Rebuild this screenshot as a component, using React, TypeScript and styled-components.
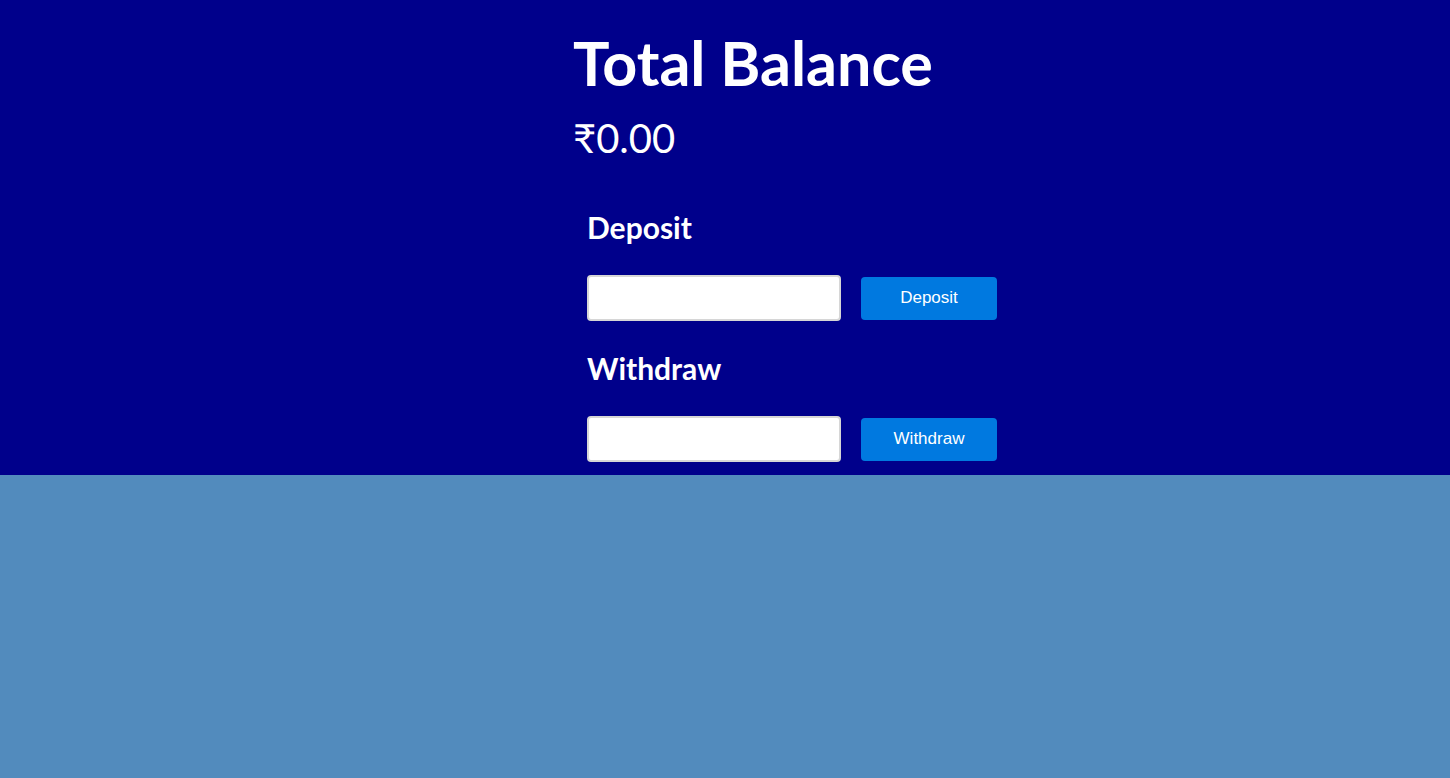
import React, { useState } from 'react';
import styled, { createGlobalStyle } from 'styled-components';

const GlobalStyle = createGlobalStyle`
  html, body {
    margin: 0;
    padding: 0;
    background-color: #528bbd;
    font-family: Lato, "Open Sans", sans-serif;
  }
`;

const Hero = styled.section`
  background-color: #00008b;
  color: #fff;
  height: 475px;
  box-sizing: border-box;
  padding-top: 27px;
`;

const Wrapper = styled.div`
  width: 304px;
  margin: 0 auto;
`;

const Title = styled.h1`
  margin: 0;
  font-size: 61px;
  line-height: 72px;
  font-weight: 700;
  white-space: nowrap;
`;

const Amount = styled.div`
  margin-top: 17px;
  font-size: 40px;
  line-height: 44px;
  font-weight: 400;
`;

const Form = styled.div`
  padding-left: 14px;
  margin-top: 50px;
`;

const Heading = styled.h2<{ $first?: boolean }>`
  margin: ${(p) => (p.$first ? '0' : '30px')} 0 0;
  font-size: 30px;
  line-height: 35px;
  font-weight: 700;
`;

const Row = styled.div`
  display: flex;
  align-items: center;
  gap: 20px;
  margin-top: 30px;
`;

const Input = styled.input`
  flex-shrink: 0;
  box-sizing: border-box;
  width: 254px;
  height: 46px;
  border: 2px solid #d6d6d6;
  border-radius: 4px;
  background: #fff;
  font-size: 16px;
  padding: 0 10px;
  outline: none;
`;

const Button = styled.button`
  flex-shrink: 0;
  width: 136px;
  height: 43px;
  border: none;
  border-radius: 4px;
  background-color: #0079e0;
  color: #fff;
  font-family: "Liberation Sans", Arial, sans-serif;
  font-size: 17px;
  cursor: pointer;
`;

const App: React.FC = () => {
  const [balance, setBalance] = useState(0);
  const [deposit, setDeposit] = useState('');
  const [withdraw, setWithdraw] = useState('');

  const handleDeposit = () => {
    const v = parseFloat(deposit);
    if (!isNaN(v) && v > 0) setBalance((b) => b + v);
    setDeposit('');
  };

  const handleWithdraw = () => {
    const v = parseFloat(withdraw);
    if (!isNaN(v) && v > 0 && v <= balance) setBalance((b) => b - v);
    setWithdraw('');
  };

  return (
    <>
      <GlobalStyle />
      <Hero>
        <Wrapper>
          <Title>Total Balance</Title>
          <Amount>₹{balance.toFixed(2)}</Amount>
          <Form>
            <Heading $first>Deposit</Heading>
            <Row>
              <Input type="number" value={deposit} onChange={(e) => setDeposit(e.target.value)} />
              <Button onClick={handleDeposit}>Deposit</Button>
            </Row>
            <Heading>Withdraw</Heading>
            <Row>
              <Input type="number" value={withdraw} onChange={(e) => setWithdraw(e.target.value)} />
              <Button onClick={handleWithdraw}>Withdraw</Button>
            </Row>
          </Form>
        </Wrapper>
      </Hero>
    </>
  );
};

export default App;
